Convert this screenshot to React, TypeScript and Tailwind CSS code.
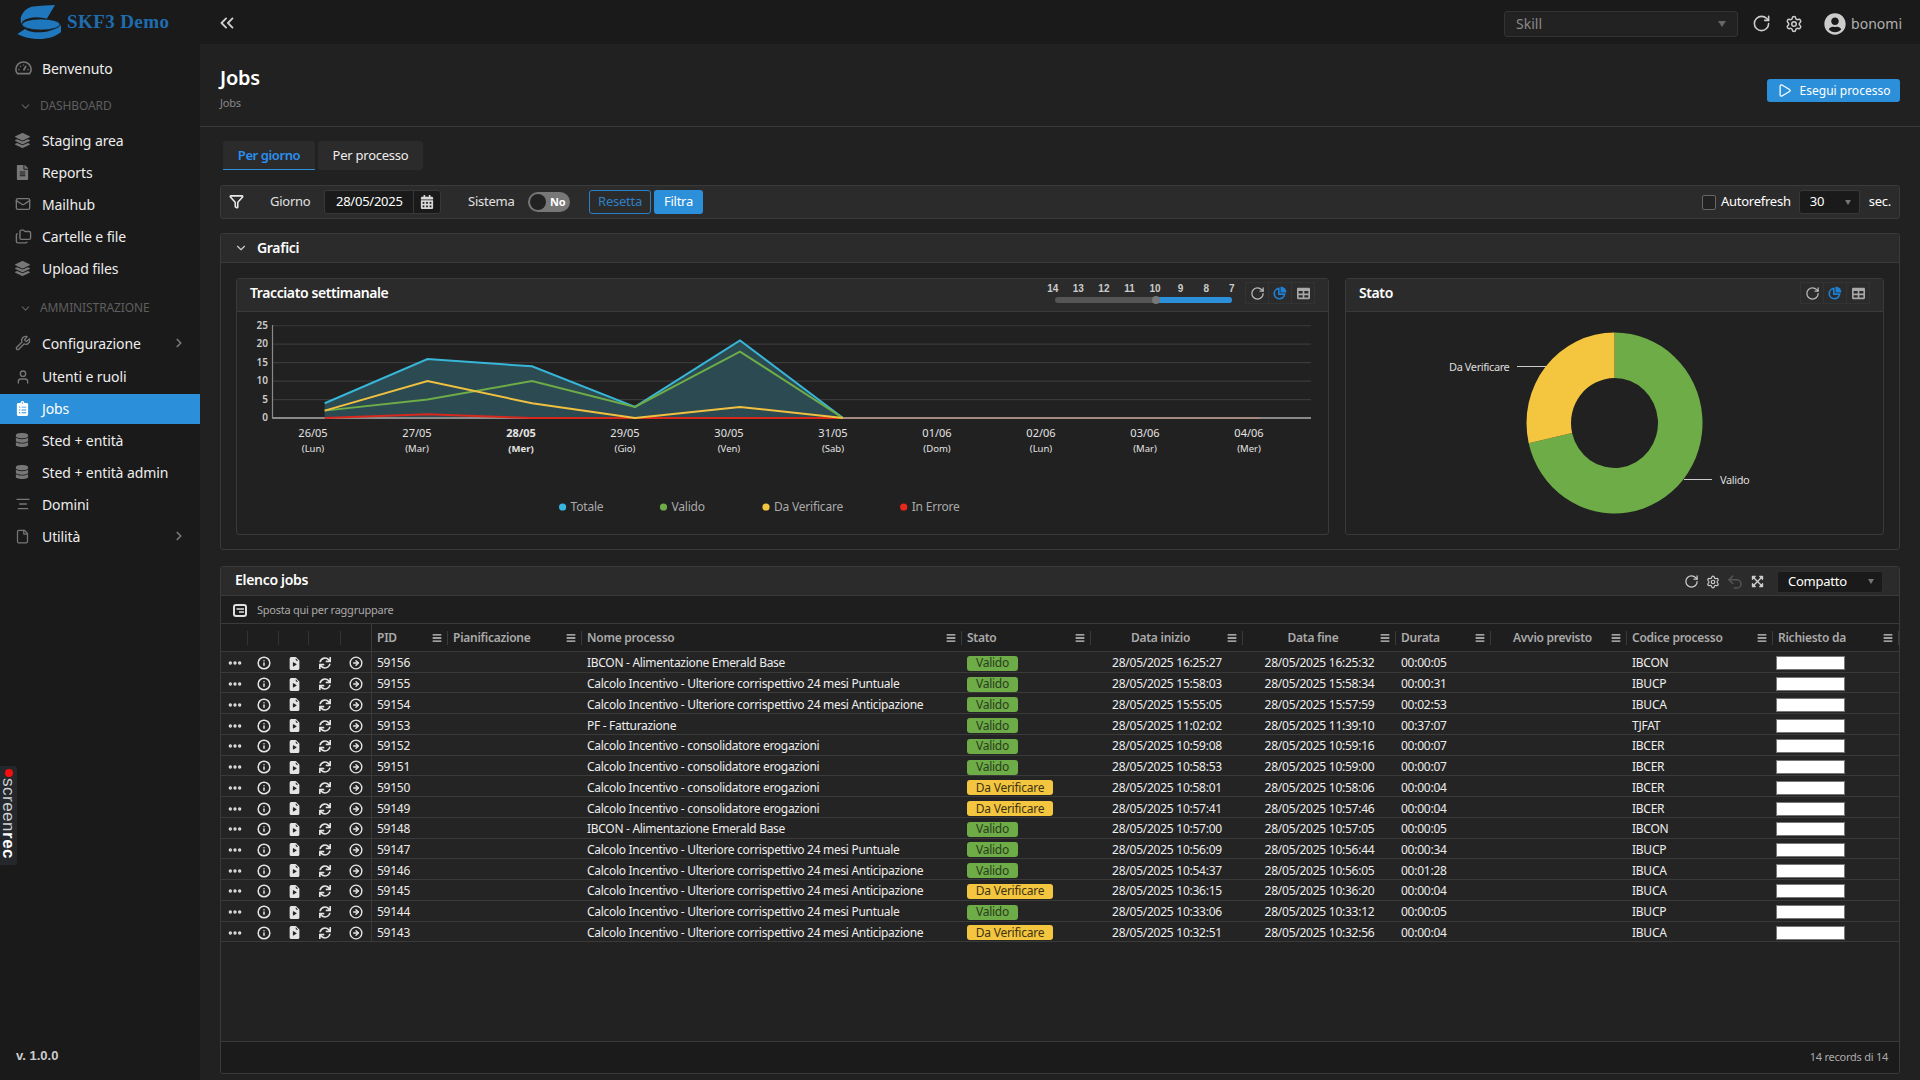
import {
  AlignCenter, ChevronDown, ChevronRight, ChevronsLeft, Ellipsis, File, Folders, Funnel, Info,
  Mail, Play, RotateCw, Settings, Undo2, User, Wrench, CircleArrowRight,
} from 'lucide-react';
import { FaCalendarAlt, FaClipboardList, FaDatabase, FaExpandArrowsAlt, FaFileAlt, FaLayerGroup, FaSync, FaTable, FaUserCircle, FaBars } from 'react-icons/fa';
import { BsFileEarmarkPlayFill } from 'react-icons/bs';
import type { ReactNode } from 'react';

const GRID = 'grid grid-cols-[27px_31px_30px_32px_31px_76px_134px_380px_129px_152px_153px_95px_136px_146px_126px]';

const PUNT = 'Calcolo Incentivo - Ulteriore corrispettivo 24 mesi Puntuale';
const ANT = 'Calcolo Incentivo - Ulteriore corrispettivo 24 mesi Anticipazione';
const CONS = 'Calcolo Incentivo - consolidatore erogazioni';
const EME = 'IBCON - Alimentazione Emerald Base';

type Job = { pid: number; name: string; ok: boolean; start: string; end: string; dur: string; code: string };

const jobs: Job[] = [
  { pid: 59156, name: EME, ok: true, start: '16:25:27', end: '16:25:32', dur: '00:00:05', code: 'IBCON' },
  { pid: 59155, name: PUNT, ok: true, start: '15:58:03', end: '15:58:34', dur: '00:00:31', code: 'IBUCP' },
  { pid: 59154, name: ANT, ok: true, start: '15:55:05', end: '15:57:59', dur: '00:02:53', code: 'IBUCA' },
  { pid: 59153, name: 'PF - Fatturazione', ok: true, start: '11:02:02', end: '11:39:10', dur: '00:37:07', code: 'TJFAT' },
  { pid: 59152, name: CONS, ok: true, start: '10:59:08', end: '10:59:16', dur: '00:00:07', code: 'IBCER' },
  { pid: 59151, name: CONS, ok: true, start: '10:58:53', end: '10:59:00', dur: '00:00:07', code: 'IBCER' },
  { pid: 59150, name: CONS, ok: false, start: '10:58:01', end: '10:58:06', dur: '00:00:04', code: 'IBCER' },
  { pid: 59149, name: CONS, ok: false, start: '10:57:41', end: '10:57:46', dur: '00:00:04', code: 'IBCER' },
  { pid: 59148, name: EME, ok: true, start: '10:57:00', end: '10:57:05', dur: '00:00:05', code: 'IBCON' },
  { pid: 59147, name: PUNT, ok: true, start: '10:56:09', end: '10:56:44', dur: '00:00:34', code: 'IBUCP' },
  { pid: 59146, name: ANT, ok: true, start: '10:54:37', end: '10:56:05', dur: '00:01:28', code: 'IBUCA' },
  { pid: 59145, name: ANT, ok: false, start: '10:36:15', end: '10:36:20', dur: '00:00:04', code: 'IBUCA' },
  { pid: 59144, name: PUNT, ok: true, start: '10:33:06', end: '10:33:12', dur: '00:00:05', code: 'IBUCP' },
  { pid: 59143, name: ANT, ok: false, start: '10:32:51', end: '10:32:56', dur: '00:00:04', code: 'IBUCA' },
];

function GaugeIcon() {
  return (
    <svg width="17" height="14" viewBox="0 0 17 14" fill="none" stroke="currentColor" strokeWidth="1.6">
      <path d="M2.4 12.6 C1.4 11.4 0.9 9.9 0.9 8.4 C0.9 4.2 4.3 1 8.5 1 C12.7 1 16.1 4.2 16.1 8.4 C16.1 9.9 15.6 11.4 14.6 12.6 Z" />
      <path d="M8.5 9.5 L11 5" />
      <path d="M3.4 8.5 H4.6 M5 5 L5.8 5.8 M8.5 3.4 V4.6 M12.4 8.5 H13.6" strokeWidth="1.3" />
    </svg>
  );
}

function NavItem({ icon, label, arrow, active, className }: { icon: ReactNode; label: string; arrow?: boolean; active?: boolean; className?: string }) {
  return (
    <div className={`flex items-center pl-[15px] pr-[14px] pb-[2px] text-[14px] tracking-[-0.1px] ${active ? 'bg-[#2b90d9] text-white' : 'text-[#eeeeee]'} ${className ?? 'h-[32px]'}`}>
      <span className={`w-[27px] flex justify-start ${active ? 'text-white' : 'text-[#777777]'}`}>{icon}</span>
      <span className="flex-1">{label}</span>
      {arrow && <ChevronRight size={14} strokeWidth={3} className="text-[#777777]" />}
    </div>
  );
}

function NavGroup({ label, className }: { label: string; className: string }) {
  return (
    <div className={`flex items-center pl-[19px] text-[12px] tracking-[-0.1px] text-[#5f5f5f] ${className}`}>
      <ChevronDown size={13} className="mr-[8px]" />
      {label}
    </div>
  );
}

function Sidebar() {
  return (
    <aside className="w-[200px] shrink-0 bg-[#1a1a1a] flex flex-col relative">
      <div className="h-[44px] flex items-center pl-[17px]">
        <svg width="45" height="35" viewBox="0 0 45 35" fill="#1f77bd" className="shrink-0">
          <path d="M3.7 14 C4 8 10 2.4 16 1.5 C24 0.5 32 0.5 38 0 L29.7 14 C24 11.5 12 11 6 16 L4 19 Z" />
          <path d="M8 24 C14 29 34 29 44 20 L44 27 C38 32 30 34 23 34 C14 34 6 32 0.3 29 Z" />
          <ellipse cx="24" cy="19.5" rx="19" ry="5.6" stroke="#1a1a1a" strokeWidth="0.8" />
        </svg>
        <span className="ml-[5px] text-[19px] font-bold text-[#1f6cae] font-['Liberation_Serif',serif] tracking-[0.4px]">SKF3 Demo</span>
      </div>
      <div className="pt-[9px]">
        <NavItem icon={<GaugeIcon />} label="Benvenuto" />
        <NavGroup label="DASHBOARD" className="h-[34px] mt-[4px] mb-[2px]" />
        <NavItem icon={<FaLayerGroup size={15} />} label="Staging area" />
        <NavItem icon={<FaFileAlt size={15} />} label="Reports" />
        <NavItem icon={<Mail size={16} />} label="Mailhub" />
        <NavItem icon={<Folders size={17} />} label="Cartelle e file" />
        <NavItem icon={<FaLayerGroup size={15} />} label="Upload files" />
        <NavGroup label="AMMINISTRAZIONE" className="h-[34px] mt-[6px] mb-[2px]" />
        <NavItem icon={<Wrench size={16} />} label="Configurazione" arrow className="h-[34px]" />
        <NavItem icon={<User size={16} />} label="Utenti e ruoli" className="h-[33px]" />
        <NavItem icon={<FaClipboardList size={15} />} label="Jobs" active className="h-[30px]" />
        <NavItem icon={<FaDatabase size={14} />} label="Sted + entità" className="h-[34px]" />
        <NavItem icon={<FaDatabase size={14} />} label="Sted + entità admin" className="h-[30px]" />
        <NavItem icon={<AlignCenter size={16} />} label="Domini" className="h-[34px]" />
        <NavItem icon={<File size={15} />} label="Utilità" arrow className="h-[30px]" />
      </div>
      <div className="mt-auto pb-[15px] pl-[16px] text-[13px] font-bold tracking-normal text-[#cccccc] font-['Liberation_Sans',sans-serif]">v. 1.0.0</div>
      <div className="absolute left-0 top-[766px] w-[17px] h-[99px] bg-[#24272c] rounded-r-[3px] flex flex-col items-center pt-[3px]">
        <span className="w-[8px] h-[8px] rounded-full bg-[#f50f0f] shrink-0" />
        <span className="[writing-mode:vertical-rl] text-[17px] leading-[17px] tracking-[0.5px] mt-[1px] text-[#d0d0d0] font-['Liberation_Sans',sans-serif]">
          screen<b className="text-white">rec</b>
        </span>
      </div>
    </aside>
  );
}

function Topbar() {
  return (
    <header className="h-[44px] shrink-0 bg-[#1a1a1a] flex items-center pl-[16px] pr-[18px] pt-[3px]">
      <ChevronsLeft size={22} strokeWidth={2} className="text-[#cfcfcf] mt-[-2px]" />
      <div className="ml-auto w-[234px] h-[26px] bg-[#222222] border border-[#333333] rounded-[3px] flex items-center px-[11px] text-[14px] tracking-normal text-[#8a8a8a]">
        <span className="flex-1">Skill</span>
        <span className="w-0 h-0 border-x-[4px] border-x-transparent border-t-[6px] border-t-[#666666]" />
      </div>
      <RotateCw size={19} strokeWidth={2} className="ml-[14px] text-[#cccccc]" />
      <Settings size={18} strokeWidth={2} className="ml-[14px] text-[#cccccc]" />
      <FaUserCircle size={22} className="ml-[21px] text-[#cccccc]" />
      <span className="ml-[5px] text-[14px] tracking-normal text-[#b0b0b0]">bonomi</span>
    </header>
  );
}

function FilterBar() {
  return (
    <div className="h-[34px] mt-[15px] bg-[#2b2b2b] border border-[#3a3a3a] rounded-[3px] flex items-center text-[13px] text-[#e0e0e0]">
      <Funnel size={15} strokeWidth={2.5} className="ml-[8px] mb-[1px] text-[#e8e8e8]" />
      <span className="ml-[26px] w-[54px]">Giorno</span>
      <div className="w-[117px] h-[24px] bg-[#1a1a1a] border border-[#383838] rounded-[3px] flex items-center">
        <span className="w-[88px] pl-[11px] text-white">28/05/2025</span>
        <span className="flex-1 h-full border-l border-[#383838] flex items-center justify-center">
          <FaCalendarAlt size={14} className="text-[#d8d8d8]" />
        </span>
      </div>
      <span className="ml-[27px] w-[60px]">Sistema</span>
      <div className="w-[42px] h-[20px] rounded-full bg-[#777777] flex items-center relative">
        <span className="ml-[2px] w-[16px] h-[16px] rounded-full bg-[#222222]" />
        <span className="ml-[4px] text-[11px] font-bold text-white">No</span>
      </div>
      <button className="ml-[19px] w-[62px] h-[24px] border border-[#2b7fc4] rounded-[3px] text-[#2f7fc4]">Resetta</button>
      <button className="ml-[3px] w-[49px] h-[24px] bg-[#2b90d9] rounded-[3px] text-white">Filtra</button>
      <span className="ml-auto w-[14px] h-[15px] border border-[#666666] rounded-[2px] bg-[#222222]" />
      <span className="ml-[5px] text-white">Autorefresh</span>
      <div className="ml-[8px] w-[61px] h-[24px] bg-[#1a1a1a] border border-[#383838] rounded-[3px] flex items-center pl-[10px] pr-[8px] text-white">
        <span className="flex-1">30</span>
        <span className="w-0 h-0 border-x-[3px] border-x-transparent border-t-[5px] border-t-[#777777]" />
      </div>
      <span className="ml-[9px] mr-[8px] text-white">sec.</span>
    </div>
  );
}

function PieIcon() {
  return (
    <svg width="14" height="14" viewBox="0 0 14 14">
      <path d="M7.5 0.5 A6 6 0 0 1 13.5 6.5 L7.5 6.5 Z" fill="#1f7fd0" />
      <path d="M5.8 2.4 A5.2 5.2 0 1 0 11.6 8.2 L5.8 8.2 Z" fill="none" stroke="#1f7fd0" strokeWidth="1.7" />
    </svg>
  );
}

function CardButtons() {
  return (
    <div className="flex h-[22px] border border-[#333333]">
      <span className="w-[23px] flex items-center justify-center border-r border-[#333333]"><RotateCw size={15} strokeWidth={2} className="text-[#bbbbbb]" /></span>
      <span className="w-[23px] flex items-center justify-center border-r border-[#333333]"><PieIcon /></span>
      <span className="w-[22px] flex items-center justify-center"><FaTable size={13} className="text-[#a8a8a8]" /></span>
    </div>
  );
}

function WeekSlider() {
  return (
    <div className="w-[192px] mr-[10px] relative h-[22px] tracking-normal font-['Liberation_Sans',sans-serif]">
      <div className="absolute left-[-3px] top-[-1px] flex text-[10px] font-bold text-[#cccccc]">
        {[14, 13, 12, 11, 10, 9, 8, 7].map((n) => <span key={n} className="w-[25.57px] text-center">{n}</span>)}
      </div>
      <div className="absolute top-[15px] left-[12px] w-[177px] h-[6px] rounded-full bg-[#555555] overflow-hidden">
        <div className="ml-[101px] h-full bg-[#2b90d9]" />
      </div>
      <span className="absolute top-[14px] left-[109px] w-[8px] h-[8px] rounded-full bg-[#777777]" />
    </div>
  );
}

const Y = (v: number) => 418 - v * 3.69;
const XS = [324.7, 427.5, 532, 635, 740, 843];
const line = (vals: number[]) => vals.map((v, i) => `${XS[i]},${Y(v)}`).join(' ');

function WeekChart() {
  const labels = [
    ['26/05', '(Lun)', 313], ['27/05', '(Mar)', 417], ['28/05', '(Mer)', 521], ['29/05', '(Gio)', 625], ['30/05', '(Ven)', 729],
    ['31/05', '(Sab)', 833], ['01/06', '(Dom)', 937], ['02/06', '(Lun)', 1041], ['03/06', '(Mar)', 1145], ['04/06', '(Mer)', 1249],
  ] as const;
  const totale = [4, 16, 14, 3, 21, 0];
  const legend = [
    ['Totale', 562.6, '#38b6e0'], ['Valido', 663.5, '#6dac46'], ['Da Verificare', 766, '#f4c63f'], ['In Errore', 903.7, '#e8281b'],
  ] as const;
  return (
    <svg width="1091" height="222" viewBox="237 312 1091 222" className="block tracking-normal">
      {[5, 10, 15, 20, 25].map((v) => (
        <line key={v} x1="272" x2="1311" y1={Y(v)} y2={Y(v)} stroke="#3a3a3a" strokeWidth="1.2" />
      ))}
      {[0, 5, 10, 15, 20, 25].map((v) => (
        <text key={v} x="268" y={Y(v) + 3} textAnchor="end" fontSize="10" fontWeight="600" fill="#cccccc">{v}</text>
      ))}
      <polygon points={`${XS[0]},418 ${line(totale)} 843,418`} fill="#2c4a52" />
      <line x1="272.5" x2="1311" y1="418" y2="418" stroke="#8a8a8a" strokeWidth="1.8" />
      <line x1="272.5" x2="272.5" y1="325" y2="418.8" stroke="#8a8a8a" strokeWidth="1.2" />
      <line x1="843" x2="1260" y1="418" y2="418" stroke="#a58a80" strokeWidth="1.8" />
      <polyline points={line(totale)} fill="none" stroke="#38b6d8" strokeWidth="2" />
      <polyline points={line([2, 5, 10, 3, 18, 0])} fill="none" stroke="#6dac46" strokeWidth="2" />
      <polyline points={line([0, 1, 0, 0, 0, 0])} fill="none" stroke="#d6281c" strokeWidth="2" />
      <polyline points={line([2, 10, 4, 0, 3, 0])} fill="none" stroke="#f0c040" strokeWidth="2" />
      {labels.map(([d, w, x]) => (
        <g key={d + w} textAnchor="middle" fill="#e4e4e4">
          <text x={x} y="437" fontSize="11" fontWeight={d === '28/05' ? 700 : 400}>{d}</text>
          <text x={x} y="452" fontSize="9.5" fontWeight={d === '28/05' ? 700 : 400}>{w}</text>
        </g>
      ))}
      {legend.map(([name, x, c]) => (
        <g key={name}>
          <circle cx={x} cy="507" r="3.6" fill={c} />
          <text x={x + 8} y="511" fontSize="12" fill="#aaaaaa" className="tracking-[-0.2px]">{name}</text>
        </g>
      ))}
    </svg>
  );
}

function Donut() {
  const cx = 1614.5, cy = 423;
  const a = (257.14 * Math.PI) / 180;
  const ox = cx + 88 * Math.sin(a), oy = cy - 90.5 * Math.cos(a);
  const ix = cx + 43.5 * Math.sin(a), iy = cy - 45 * Math.cos(a);
  return (
    <svg width="537" height="222" viewBox="1346 312 537 222" className="block tracking-[-0.4px]">
      <path d={`M${cx} ${cy - 90.5} A88 90.5 0 1 1 ${ox} ${oy} L${ix} ${iy} A43.5 45 0 1 0 ${cx} ${cy - 45} Z`} fill="#6dac46" />
      <path d={`M${ox} ${oy} A88 90.5 0 0 1 ${cx} ${cy - 90.5} L${cx} ${cy - 45} A43.5 45 0 0 0 ${ix} ${iy} Z`} fill="#f4c63f" />
      <line x1="1517" x2="1546" y1="366.5" y2="366.5" stroke="#cccccc" />
      <line x1="1684" x2="1712" y1="479.5" y2="479.5" stroke="#cccccc" />
      <text x="1449" y="370.5" fontSize="11" fill="#dddddd">Da Verificare</text>
      <text x="1720" y="484" fontSize="11" fill="#dddddd">Valido</text>
    </svg>
  );
}

function Card({ title, right, className, children }: { title: string; right: ReactNode; className: string; children: ReactNode }) {
  return (
    <div className={`border border-[#3a3a3a] rounded-[3px] bg-[#212121] ${className}`}>
      <div className="h-[33px] bg-[#2b2b2b] border-b border-[#3a3a3a] flex items-center pl-[13px] pr-[13px] pb-[4px]">
        <span className="text-[14px] font-semibold text-white tracking-[-0.4px] mb-[2px]">{title}</span>
        <div className="ml-auto flex items-center">{right}</div>
      </div>
      {children}
    </div>
  );
}

function Grafici() {
  return (
    <section className="h-[317px] mt-[14px] border border-[#3a3a3a] rounded-[3px]">
      <div className="h-[29px] bg-[#2b2b2b] border-b border-[#3a3a3a] flex items-center pl-[13px] text-white">
        <ChevronDown size={14} className="text-[#cccccc]" />
        <span className="ml-[9px] mb-[1px] text-[14px] font-semibold tracking-[-0.3px]">Grafici</span>
      </div>
      <div className="flex gap-[16px] px-[15px] pt-[15px]">
        <Card title="Tracciato settimanale" className="w-[1093px]" right={<><WeekSlider /><CardButtons /></>}>
          <WeekChart />
        </Card>
        <Card title="Stato" className="flex-1" right={<CardButtons />}>
          <Donut />
        </Card>
      </div>
    </section>
  );
}

function HeadCell({ label, center }: { label: string; center?: boolean }) {
  return (
    <div className="h-[14px] self-center border-r border-[#3a3a3a] flex items-center pl-[5px] pr-[5px] gap-[2px]">
      <span className={`flex-1 text-[12px] font-semibold text-[#aaaaaa] ${center ? 'text-center' : ''}`}>{label}</span>
      <FaBars size={10} className="text-[#cccccc]" />
    </div>
  );
}

function JobRow({ job }: { job: Job }) {
  const icon = 'flex items-center justify-center text-[#e4e4e4]';
  return (
    <div className={`${GRID} h-[20.74px] pt-[3px] items-stretch bg-[#242424] border-b border-[#3a3a3a] text-[12px] text-[#eeeeee] leading-none`}>
      <span className={icon}><Ellipsis size={16} strokeWidth={3} /></span>
      <span className={icon}><Info size={14} strokeWidth={2.6} /></span>
      <span className={icon}><BsFileEarmarkPlayFill size={13} /></span>
      <span className={icon}><FaSync size={12} /></span>
      <span className={`${icon} border-r border-[#3a3a3a] mt-[-3px] pt-[3px]`}><CircleArrowRight size={14} strokeWidth={2.4} /></span>
      <span className="flex items-center pl-[5px]">{job.pid}</span>
      <span />
      <span className="flex items-center pl-[5px] tracking-[-0.3px]">{job.name}</span>
      <span className="flex items-center pl-[5px]">
        {job.ok
          ? <span className="w-[51px] h-[15px] rounded-[3px] bg-[#6dac46] text-[#2b3d20] flex items-center justify-center">Valido</span>
          : <span className="w-[86px] h-[15px] rounded-[3px] bg-[#f4c63f] text-[#3d3315] flex items-center justify-center">Da Verificare</span>}
      </span>
      <span className="flex items-center justify-center">28/05/2025 {job.start}</span>
      <span className="flex items-center justify-center">28/05/2025 {job.end}</span>
      <span className="flex items-center pl-[5px]">{job.dur}</span>
      <span />
      <span className="flex items-center pl-[5px]">{job.code}</span>
      <span className="flex items-center pl-[3px]">
        <span className="w-[69px] h-[14px] bg-white border border-[#777777]" />
      </span>
    </div>
  );
}

function JobsTable() {
  return (
    <section className="flex-1 mt-[16px] border border-[#3a3a3a] rounded-[3px] flex flex-col overflow-hidden">
      <div className="h-[29px] shrink-0 bg-[#2b2b2b] border-b border-[#3a3a3a] flex items-center pl-[14px] pr-[16px] pt-[1px]">
        <span className="text-[14px] font-semibold text-white tracking-[-0.3px] mb-[4px]">Elenco jobs</span>
        <RotateCw size={15} strokeWidth={2} className="ml-auto text-[#cccccc]" />
        <Settings size={14} strokeWidth={2} className="ml-[7px] text-[#cccccc]" />
        <Undo2 size={18} strokeWidth={2} className="ml-[6px] text-[#555555]" />
        <FaExpandArrowsAlt size={13} className="ml-[7px] text-[#cccccc]" />
        <div className="ml-[13px] w-[106px] h-[22px] bg-[#1a1a1a] border border-[#2e2e2e] rounded-[3px] flex items-center pl-[10px] pr-[8px] text-[13px] text-white">
          <span className="flex-1">Compatto</span>
          <span className="w-0 h-0 border-x-[3px] border-x-transparent border-t-[5px] border-t-[#777777]" />
        </div>
      </div>
      <div className="h-[28px] shrink-0 bg-[#1e1e1e] border-b border-[#3a3a3a] flex items-center pl-[12px] pt-[2px] text-[11px] text-[#aaaaaa]">
        <svg width="14" height="13" viewBox="0 0 14 13" fill="none" stroke="#e0e0e0" strokeWidth="2">
          <rect x="1" y="1" width="12" height="11" rx="2" />
          <path d="M3.5 5 H11 M6 8 H11" strokeWidth="1.4" />
        </svg>
        <span className="ml-[10px]">Sposta qui per raggruppare</span>
      </div>
      <div className={`${GRID} h-[28px] shrink-0 bg-[#1e1e1e] border-b border-[#3a3a3a]`}>
        <span className="h-[14px] self-center border-r border-[#333333]" />
        <span className="h-[14px] self-center border-r border-[#333333]" />
        <span className="h-[14px] self-center border-r border-[#333333]" />
        <span className="h-[14px] self-center border-r border-[#333333]" />
        <span className="border-r border-[#3a3a3a]" />
        <HeadCell label="PID" />
        <HeadCell label="Pianificazione" />
        <HeadCell label="Nome processo" />
        <HeadCell label="Stato" />
        <HeadCell label="Data inizio" center />
        <HeadCell label="Data fine" center />
        <HeadCell label="Durata" />
        <HeadCell label="Avvio previsto" center />
        <HeadCell label="Codice processo" />
        <HeadCell label="Richiesto da" />
      </div>
      <div className="flex-1 bg-[#222222]">
        {jobs.map((job) => <JobRow key={job.pid} job={job} />)}
      </div>
      <div className="h-[32px] shrink-0 bg-[#1b1b1b] border-t border-[#3a3a3a] flex items-center justify-end pr-[11px] text-[11px] text-[#aaaaaa]">
        14 records di 14
      </div>
    </section>
  );
}

export default function App() {
  return (
    <div className="w-[1920px] h-[1080px] flex overflow-hidden bg-[#212121] tracking-[-0.25px] font-['Noto_Sans',sans-serif]">
      <Sidebar />
      <main className="flex-1 min-w-0 flex flex-col">
        <Topbar />
        <div className="h-[83px] shrink-0 border-b border-[#3a3a3a] flex items-center pl-[20px] pr-[20px]">
          <div className="mt-[4px]">
            <h1 className="text-[20px] font-semibold leading-[26px] text-white">Jobs</h1>
            <div className="mt-[5px] text-[11px] leading-[14px] text-[#888888]">Jobs</div>
          </div>
          <button className="ml-auto w-[133px] h-[23px] mt-[11px] bg-[#2b90d9] rounded-[3px] flex items-center justify-center gap-[8px] text-[12px] tracking-normal text-white">
            <Play size={15} strokeWidth={2} />
            Esegui processo
          </button>
        </div>
        <div className="flex-1 min-h-0 flex flex-col px-[20px] pt-[14px] pb-[6px]">
          <div className="flex gap-[3px] h-[29px] pl-[3px] shrink-0">
            <div className="w-[92px] bg-[#2b2b2b] border-b border-[#2b90d9] rounded-t-[3px] pt-[1px] flex items-center justify-center text-[13px] font-semibold tracking-[-0.4px] text-[#2b8ff0]">Per giorno</div>
            <div className="w-[105px] bg-[#2b2b2b] rounded-[3px] flex items-center justify-center text-[13px] text-[#eeeeee]">Per processo</div>
          </div>
          <FilterBar />
          <Grafici />
          <JobsTable />
        </div>
      </main>
    </div>
  );
}
